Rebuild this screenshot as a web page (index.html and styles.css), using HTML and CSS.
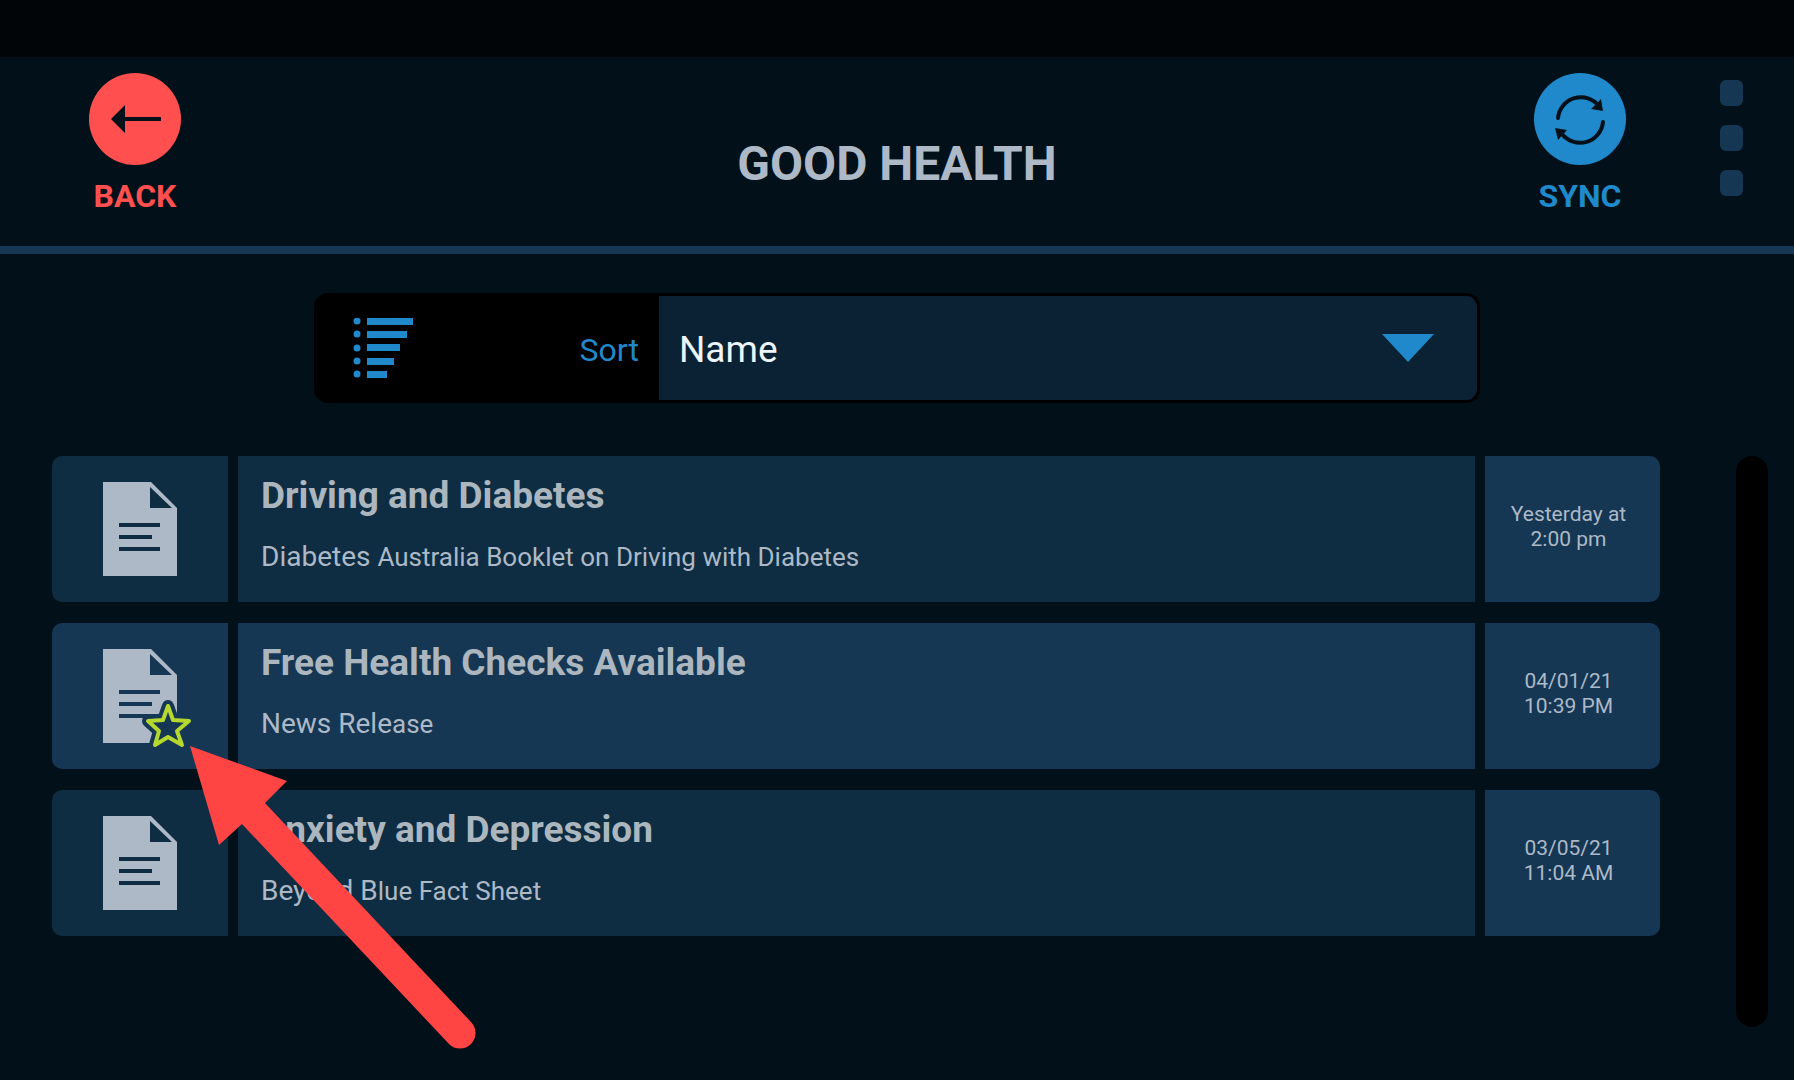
FILE: index.html
```html
<!DOCTYPE html>
<html lang="en">
<head>
  <meta charset="UTF-8">
  <meta name="viewport" content="width=device-width, initial-scale=1.0">
  <title>Good Health</title>
  <link rel="stylesheet" href="styles.css">
</head>
<body>
  <div class="status-bar"></div>

  <header class="header">
    <div class="header-left">
      <button type="button" class="nav-button back">
        <svg class="nav-icon" viewBox="0 0 92 92" aria-hidden="true">
          <circle cx="46" cy="46" r="46" fill="#ff4f4f"/>
          <path d="M22 46 36 32V44H72V48H36V60Z" fill="#021019"/>
        </svg>
        <span>BACK</span>
      </button>
    </div>
    <h1>GOOD HEALTH</h1>
    <div class="header-right">
      <button type="button" class="nav-button sync">
        <svg class="nav-icon" viewBox="0 0 92 92" aria-hidden="true">
          <circle cx="46" cy="46" r="46" fill="#2089cb"/>
          <g fill="none" stroke="#021019" stroke-width="4" stroke-linecap="round">
            <path d="M24 45A23 23 0 0 1 65 33"/>
            <path d="M69 49A23 23 0 0 1 28 61"/>
          </g>
          <path d="M67 26 69 38 57 36Z M21 55 33 57 24 67Z" fill="#021019"/>
        </svg>
        <span>SYNC</span>
      </button>
      <button type="button" class="menu-button" aria-label="Menu">
        <span class="dot"></span>
        <span class="dot"></span>
        <span class="dot"></span>
      </button>
    </div>
  </header>

  <main>
    <div class="sort">
      <label class="sort-label" for="sortBy">
        <svg class="sort-icon" viewBox="0 0 60 60" aria-hidden="true">
          <g fill="#2089cb">
            <circle cx="4" cy="3" r="3.5"/><rect x="14" y="0" width="46" height="7"/>
            <circle cx="4" cy="16" r="3.5"/><rect x="14" y="13" width="40" height="7"/>
            <circle cx="4" cy="30" r="3.5"/><rect x="14" y="26" width="33" height="7"/>
            <circle cx="4" cy="43" r="3.5"/><rect x="14" y="40" width="27" height="7"/>
            <circle cx="4" cy="56" r="3.5"/><rect x="14" y="53" width="20" height="7"/>
          </g>
        </svg>
        <span>Sort</span>
      </label>
      <div class="sort-field">
        <select id="sortBy" name="sortBy">
          <option value="name">Name</option>
        </select>
        <svg class="sort-arrow" viewBox="0 0 52 28" aria-hidden="true">
          <path d="M0 0H52L26 28Z" fill="#2089cb"/>
        </svg>
      </div>
    </div>

    <div class="content">
      <ul class="list">
        <li>
          <a class="row" href="#driving">
            <span class="cell icon-cell">
              <svg class="doc-icon" viewBox="0 0 74 94" aria-hidden="true">
                <path fill="#adb9c6" fill-rule="evenodd" d="M0 0H48L74 26V94H0Z M47 5V26H69Z M16 41V45H57V41Z M16 53V57H49V53Z M16 65V69H57V65Z"/>
              </svg>
            </span>
            <span class="cell text-cell">
              <strong>Driving and Diabetes</strong>
              <span class="summary">Diabetes <small>Australia Booklet on Driving with Diabetes</small></span>
            </span>
            <span class="cell date-cell">Yesterday at<br>2:00 pm</span>
          </a>
        </li>
        <li>
          <a class="row unread" href="#checks">
            <span class="cell icon-cell">
              <svg class="doc-icon" viewBox="0 0 74 94" aria-hidden="true">
                <path fill="#adb9c6" fill-rule="evenodd" d="M0 0H48L74 26V94H0Z M47 5V26H69Z M16 41V45H57V41Z M16 53V57H49V53Z M16 65V69H57V65Z"/>
                <g stroke-linejoin="round">
                  <path d="M65 57 70 71 86 72 74 82 79 96 65 88 52 96 56 82 45 72 60 71Z" fill="#153754" stroke="#153754" stroke-width="12"/>
                  <path d="M65 57 70 71 86 72 74 82 79 96 65 88 52 96 56 82 45 72 60 71Z" fill="none" stroke="#b5d72e" stroke-width="4"/>
                </g>
              </svg>
            </span>
            <span class="cell text-cell">
              <strong>Free Health Checks Available</strong>
              <span class="summary">News Rele<small>ase</small></span>
            </span>
            <span class="cell date-cell">04/01/21<br>10:39 PM</span>
          </a>
        </li>
        <li>
          <a class="row" href="#anxiety">
            <span class="cell icon-cell">
              <svg class="doc-icon" viewBox="0 0 74 94" aria-hidden="true">
                <path fill="#adb9c6" fill-rule="evenodd" d="M0 0H48L74 26V94H0Z M47 5V26H69Z M16 41V45H57V41Z M16 53V57H49V53Z M16 65V69H57V65Z"/>
              </svg>
            </span>
            <span class="cell text-cell">
              <strong>Anxiety and Depression</strong>
              <span class="summary">Beyond B<small>lue Fact Sheet</small></span>
            </span>
            <span class="cell date-cell">03/05/21<br>11:04 AM</span>
          </a>
        </li>
      </ul>
      <div class="scrollbar"></div>
    </div>
  </main>

  <!-- pointer to the favourite star -->
  <svg class="pointer" viewBox="0 0 290 306" aria-hidden="true">
    <path d="M0 0 97 35 75 57 281 276A15.500 15.500 0 0 1 259 298L52 78 29 99Z" fill="#ff4444"/>
  </svg>
</body>
</html>
```
FILE: styles.css
```css
* {
  box-sizing: border-box;
}
body {
  margin: 0;
  min-height: 100vh;
  position: relative;
  background: #021019;
  color: #adb9c6;
  font-family: Roboto, sans-serif;
}
button {
  padding: 0;
  border: none;
  background: none;
  font-family: inherit;
  cursor: pointer;
}
svg {
  display: block;
}
.status-bar {
  height: 57px;
  background: #010508;
}
.header {
  display: grid;
  grid-template-columns: 1fr auto 1fr;
  height: 197px;
  padding-top: 16px;
  border-bottom: 8px solid #153754;
}
h1 {
  margin: 63px 0 0;
  font-size: 48px;
  line-height: 56px;
  font-weight: 700;
}
.header-left {
  padding-left: 89px;
}
.header-right {
  display: flex;
  justify-content: flex-end;
  align-items: flex-start;
  gap: 94px;
  padding-right: 51px;
}
.nav-button {
  width: 92px;
  font-size: 32px;
  line-height: 38px;
  font-weight: 700;
}
.nav-icon {
  width: 92px;
  height: 92px;
  margin-bottom: 12px;
}
.back {
  color: #ff4f4f;
}
.sync {
  color: #2089cb;
}
.menu-button {
  display: flex;
  flex-direction: column;
  gap: 19px;
  padding-top: 7px;
}
.dot {
  width: 23px;
  height: 26px;
  border-radius: 6px;
  background: #153754;
}
.sort {
  display: flex;
  width: 65%;
  height: 110px;
  margin: 39px auto 53px;
  border: 3px solid #000;
  border-radius: 14px;
  background: #000;
}
.sort-label {
  display: flex;
  justify-content: space-between;
  align-items: center;
  width: 342px;
  padding: 0 20px 0 36px;
  color: #2089cb;
  font-size: 32px;
}
.sort-label span {
  padding-top: 3px;
}
.sort-icon {
  width: 60px;
  height: 60px;
}
.sort-field {
  position: relative;
  flex: 1;
}
select {
  appearance: none;
  width: 100%;
  height: 100%;
  padding: 3px 20px 0;
  border: none;
  border-radius: 0 11px 11px 0;
  background: #0a2233;
  color: #edf5fc;
  font-family: inherit;
  font-size: 37px;
}
.sort-arrow {
  position: absolute;
  top: 38px;
  right: 43px;
  width: 52px;
  height: 28px;
  pointer-events: none;
}
.content {
  display: flex;
  gap: 76px;
  padding: 0 26px 0 52px;
}
.list {
  display: flex;
  flex: 1;
  flex-direction: column;
  gap: 21px;
  margin: 0;
  padding: 0;
  list-style: none;
}
.row {
  display: grid;
  grid-template-columns: 176px 1fr 175px;
  column-gap: 10px;
  color: inherit;
  text-decoration: none;
}
.cell {
  display: flex;
  min-height: 146px;
  background: #0f2d42;
}
.icon-cell {
  justify-content: center;
  align-items: center;
  border-radius: 10px 0 0 10px;
}
.doc-icon {
  width: 74px;
  height: 94px;
  overflow: visible;
}
.text-cell {
  flex-direction: column;
  gap: 22px;
  padding: 18px 23px 0;
}
.text-cell strong {
  color: #abb6bf;
  font-size: 37px;
  line-height: 44px;
  font-weight: 700;
}
.summary {
  font-size: 28px;
  line-height: 34px;
}
.summary small {
  font-size: 26px;
}
.date-cell {
  justify-content: center;
  align-items: center;
  padding: 0 8px 4px 0;
  border-radius: 0 10px 10px 0;
  font-size: 21px;
  line-height: 25px;
  text-align: center;
}
.date-cell,
.unread .cell {
  background: #153754;
}
.scrollbar {
  width: 32px;
  height: 571px;
  border-radius: 16px;
  background: #000;
}
.pointer {
  position: absolute;
  top: 746px;
  left: 190px;
  width: 290px;
  height: 306px;
  pointer-events: none;
}
```
